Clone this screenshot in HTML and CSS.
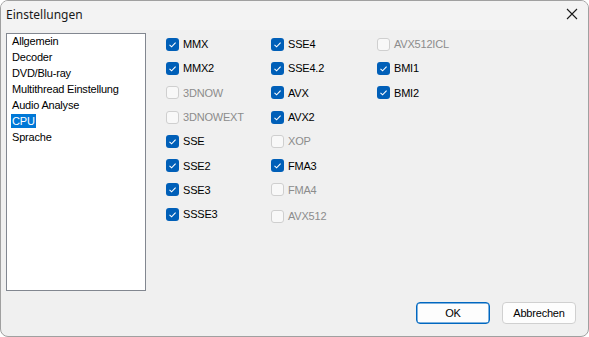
FILE: index.html
```html
<!DOCTYPE html>
<html lang="de">
<head>
<meta charset="utf-8">
<title>Einstellungen</title>
<link rel="stylesheet" href="styles.css">
</head>
<body>
<div class="window">
  <div class="titlebar">
    <span class="title">Einstellungen</span>
    <span class="close"><svg width="12" height="12" viewBox="0 0 12 12"><path d="M1 1 L11 11 M11 1 L1 11" stroke="#1a1a1a" stroke-width="1.1" fill="none"/></svg></span>
  </div>
  <div class="main">
    <ul class="list">
      <li>Allgemein</li>
      <li>Decoder</li>
      <li>DVD/Blu-ray</li>
      <li>Multithread Einstellung</li>
      <li>Audio Analyse</li>
      <li><span class="sel">CPU</span></li>
      <li>Sprache</li>
    </ul>
    <div class="grid">
      <label class="cb on">MMX</label>
      <label class="cb on">SSE4</label>
      <label class="cb off">AVX512ICL</label>
      <label class="cb on">MMX2</label>
      <label class="cb on">SSE4.2</label>
      <label class="cb on">BMI1</label>
      <label class="cb off">3DNOW</label>
      <label class="cb on">AVX</label>
      <label class="cb on">BMI2</label>
      <label class="cb off">3DNOWEXT</label>
      <label class="cb on">AVX2</label>
      <span></span>
      <label class="cb on">SSE</label>
      <label class="cb off">XOP</label>
      <span></span>
      <label class="cb on">SSE2</label>
      <label class="cb on">FMA3</label>
      <span></span>
      <label class="cb on">SSE3</label>
      <label class="cb off">FMA4</label>
      <span></span>
      <label class="cb on">SSSE3</label>
      <label class="cb off low">AVX512</label>
      <span></span>
    </div>
  </div>
  <div class="footer">
    <button class="btn default">OK</button>
    <button class="btn">Abbrechen</button>
  </div>
</div>
</body>
</html>
```
FILE: styles.css
```css
html, body {
  margin: 0;
  padding: 0;
  background: #ffffff;
}
.window {
  box-sizing: border-box;
  width: 589px;
  height: 337px;
  border: 1px solid #a0a0a0;
  border-radius: 8px;
  background: #f0f0f0;
  overflow: hidden;
  display: flex;
  flex-direction: column;
  font-family: "Liberation Sans", Arial, sans-serif;
  font-size: 11px;
  color: #000;
}
.titlebar {
  height: 29px;
  flex: none;
  display: flex;
  align-items: center;
  justify-content: space-between;
  background: #f3f3f3;
  padding: 0 10px 0 5px;
}
.title {
  font-family: "Noto Sans", "Open Sans", sans-serif;
  font-size: 12px;
  color: #1a1a1a;
  position: relative;
  top: -1px;
}
.close {
  display: flex;
  width: 12px;
  height: 12px;
  position: relative;
  top: -2px;
}
.main {
  flex: 1;
  display: flex;
  padding: 3px 0 0 5px;
}
.list {
  box-sizing: border-box;
  list-style: none;
  margin: 0;
  padding: 0 0 0 5px;
  width: 140px;
  height: 258px;
  background: #fff;
  border: 1px solid #828790;
  letter-spacing: -0.2px;
}
.list li {
  height: 16px;
  line-height: 14px;
}
.sel {
  display: inline-block;
  background: #0078d7;
  color: #fff;
  padding: 0 1px;
  margin-left: -1px;
}
.grid {
  margin-left: 20px;
  margin-top: -1px;
  display: grid;
  grid-template-columns: 105px 106px 106px;
  grid-auto-rows: 24.3px;
  align-items: center;
  align-content: start;
}
.cb {
  display: flex;
  align-items: center;
  gap: 4px;
  letter-spacing: -0.2px;
  height: 24px;
}
.cb::before {
  content: "";
  box-sizing: border-box;
  width: 13px;
  height: 13px;
  flex: none;
  border-radius: 3px;
}
.cb.on::before {
  background: #005fb8 url("data:image/svg+xml;utf8,<svg xmlns='http://www.w3.org/2000/svg' width='13' height='13' viewBox='0 0 13 13'><path d='M3.5 6.8 L5.6 8.8 L9.6 4.6' stroke='white' stroke-width='1.1' fill='none'/></svg>") no-repeat center;
}
.cb.off {
  color: #8c8c8c;
}
.cb.off::before {
  border: 1px solid #cfcfcf;
  background: #f8f8f8;
}
.cb.low {
  position: relative;
  top: 2px;
}
.footer {
  flex: none;
  display: flex;
  justify-content: flex-end;
  gap: 12px;
  padding: 0 12px 12px 0;
}
.btn {
  box-sizing: border-box;
  width: 74px;
  height: 22px;
  font-family: "Liberation Sans", Arial, sans-serif;
  font-size: 11px;
  letter-spacing: -0.2px;
  color: #000;
  background: #fdfdfd;
  border: 1px solid #d0d0d0;
  border-radius: 4px;
  padding: 0;
}
.btn.default {
  border: 1px solid #0067c0;
  box-shadow: inset 0 0 0 0.5px #0067c0;
}
```
